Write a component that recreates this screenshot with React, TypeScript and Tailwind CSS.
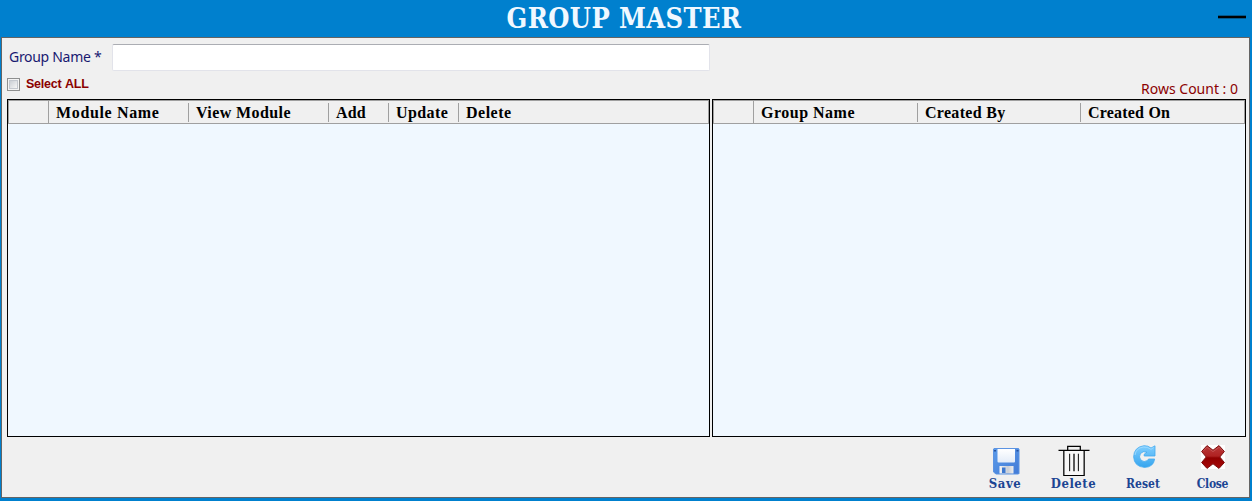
import type { ReactNode } from "react";

type Column = { label: string; cell: string; text: string };

const moduleColumns: Column[] = [
  { label: "Module Name", cell: "w-[140px]", text: "tracking-[0.65px]" },
  { label: "View Module", cell: "w-[140px]", text: "tracking-[0.4px]" },
  { label: "Add", cell: "w-[60px]", text: "tracking-[0.1px]" },
  { label: "Update", cell: "w-[70px]", text: "tracking-[0.4px]" },
  { label: "Delete", cell: "flex-1", text: "tracking-[0.5px]" },
];

const groupColumns: Column[] = [
  { label: "Group Name", cell: "w-[164px]", text: "tracking-[0.5px]" },
  { label: "Created By", cell: "w-[163px]", text: "tracking-[0.3px]" },
  { label: "Created On", cell: "flex-1", text: "tracking-[0.2px]" },
];

function Grid({ columns, size }: { columns: Column[]; size: string }) {
  return (
    <section className={`h-[338px] border border-black bg-[#f0f8ff] ${size}`}>
      <div className="flex h-6 border border-[#a0a0a0] bg-[#f0f0f0]">
        <div className="w-10 shrink-0 border-r border-[#a0a0a0]" />
        {columns.map((column, i) => (
          <div key={column.label} className={`flex items-center ${column.cell}`}>
            <span
              className={`flex-1 whitespace-nowrap pt-0.5 pl-[7px] font-['Liberation_Serif',serif] text-[16px] leading-[22px] font-bold text-black ${column.text}`}
            >
              {column.label}
            </span>
            {i < columns.length - 1 && <i className="h-[19px] w-px bg-[#a0a0a0]" />}
          </div>
        ))}
      </div>
    </section>
  );
}

function SaveIcon() {
  return (
    <svg width="27" height="27" viewBox="0 0 27 27" className="block">
      <defs>
        <linearGradient id="disk" x1="0" y1="0" x2="1" y2="1">
          <stop offset="0" stopColor="#5b9bea" />
          <stop offset="1" stopColor="#427bd6" />
        </linearGradient>
        <linearGradient id="paper" x1="0" y1="0" x2="0" y2="1">
          <stop offset="0" stopColor="#ffffff" />
          <stop offset="1" stopColor="#e3ecf8" />
        </linearGradient>
        <linearGradient id="metal" x1="0" y1="0" x2="1" y2="0">
          <stop offset="0" stopColor="#f5f5f5" />
          <stop offset="0.6" stopColor="#c9ced6" />
          <stop offset="1" stopColor="#eeeeee" />
        </linearGradient>
      </defs>
      <path d="M1 .5h24.5l.5.5v24.5l-.5.5H3L.5 24V1z" fill="url(#disk)" stroke="#5b93e2" />
      <path d="M4.5 1h17.5v12.500q0 1-1 1H5.500q-1 0-1-1z" fill="url(#paper)" />
      <path d="M1 2h2v1.500H1zM23.500 2h2v1.500h-2z" fill="#24509b" />
      <path d="M6.500 18h14v7.500h-14z" fill="url(#metal)" />
      <path d="M9 19.500h3.500V25H9z" fill="#3d78cf" />
    </svg>
  );
}

function TrashIcon() {
  return (
    <svg width="32" height="32" viewBox="0 0 32 32" className="block" fill="none" stroke="#000">
      <path d="M5.500 5h21v26h-21z" fill="#f7f7f7" stroke="none" />
      <path d="M0 5.500h32M5.500 5.500v26h21v-26M9.500 5V1.500h13V5" strokeWidth="1.300" />
      <path d="M11.500 9v18M20.500 9v18" />
      <path d="M16 9v18" stroke="#555" strokeWidth="2" />
    </svg>
  );
}

function ResetIcon() {
  return (
    <svg width="23" height="23" viewBox="0 0 23 23" className="block">
      <defs>
        <linearGradient id="arrow" x1="0" y1="0" x2="0" y2="1">
          <stop offset="0" stopColor="#7fceff" />
          <stop offset="1" stopColor="#36a5ee" />
        </linearGradient>
      </defs>
      <path
        d="M22 .8V11H11.200V9.200L14 7.200Q10 5.600 7.500 8.500Q5.200 12 8 15.200Q11 17.800 14.500 15.500L15.500 14H21.700Q20.400 22.300 11.500 22.400Q1.200 21.800.6 11.800Q1 2 11 .7Q15 .5 18 3z"
        fill="url(#arrow)"
        stroke="#42aaf0"
        strokeWidth=".8"
      />
      <path d="M2 10Q3 3 10.500 2Q14.500 1.600 18 4.300L20.600 2.500" fill="none" stroke="#a5ddff" strokeWidth=".8" />
    </svg>
  );
}

function CloseIcon() {
  return (
    <svg width="24" height="24" viewBox="0 0 24 24" className="block">
      <defs>
        <linearGradient id="cross" x1="0" y1="0" x2="0" y2="1">
          <stop offset="0" stopColor="#b93a3a" />
          <stop offset=".46" stopColor="#b02222" />
          <stop offset=".54" stopColor="#900000" />
          <stop offset="1" stopColor="#a80808" />
        </linearGradient>
      </defs>
      <path d="M0 0h24v24H0z" fill="#fff" />
      <path
        d="M6 .6L12 5.200L18 .6L23.400 6.500L18.800 12L23.400 17.500L18 23.400L12 18.800L6 23.400L.6 17.500L5.200 12L.6 6.500z"
        fill="url(#cross)"
        stroke="#7c1010"
        strokeWidth="1"
        strokeLinejoin="round"
      />
      <path d="M2 6.300L6 2.200L12 6.700L18 2.200L22 6.300" fill="none" stroke="#cc6060" strokeWidth=".7" />
    </svg>
  );
}

function Action({ icon, label, box, text }: { icon: ReactNode; label: string; box: string; text: string }) {
  return (
    <button type="button" className={`flex h-[60px] flex-col items-center justify-between pb-[5px] ${box}`}>
      {icon}
      <span
        className={`whitespace-nowrap font-['DejaVu_Serif_Condensed','DejaVu_Serif',serif] font-bold leading-4 text-[#1c4593] ${text}`}
      >
        {label}
      </span>
    </button>
  );
}

export default function App() {
  return (
    <main className="flex h-[501px] w-[1252px] flex-col overflow-hidden bg-[#0080ce] pr-0.5 pb-[3px] pl-px">
      <header className="flex h-[37px] shrink-0 items-start">
        <div className="w-[29px]" />
        <h1 className="flex-1 pt-px text-center font-['DejaVu_Serif_Condensed','DejaVu_Serif',serif] text-[27px] leading-[36px] font-bold tracking-[0.4px] text-[#f0f8ff]">
          GROUP MASTER
        </h1>
        <button type="button" aria-label="Minimize" className="mt-[15px] mr-[4px] h-1 w-7 border-y border-[#04588c] bg-black" />
      </header>
      <div className="flex flex-1 flex-col border border-[#646464] bg-[#f0f0f0]">
        <div className="flex h-[61px] justify-between pl-[5px]">
          <div className="pt-[6px]">
            <label className="flex h-[27px] items-center">
              <span className="w-[105px] pb-[3px] pl-[2px] font-['Noto_Sans',sans-serif] text-[14px] tracking-[-0.3px] whitespace-nowrap text-[#191970]">
                Group Name *
              </span>
              <input
                type="text"
                className="h-[27px] w-[598px] rounded-[2px] border border-[#e2e3ea] border-t-[#abadb3] bg-white px-1 outline-none"
              />
            </label>
            <label className="mt-[4px] flex h-[18px] items-center">
              <span className="flex h-[13px] w-[13px] border border-[#8e8f8f] bg-[#f4f4f4] p-px">
                <i className="flex-1 border border-[#c4c8cf] bg-linear-to-br from-[#cbcfd5] to-[#f6f6f6]" />
              </span>
              <span className="pl-[6px] font-['Liberation_Sans',sans-serif] text-[12.5px] font-bold tracking-[-0.25px] text-[#8b0000] [word-spacing:1px]">
                Select ALL
              </span>
            </label>
          </div>
          <span className="mt-[41px] mr-[11px] font-['Noto_Sans',sans-serif] text-[14px] leading-5 text-[#8b0000]">
            Rows Count : 0
          </span>
        </div>
        <div className="flex gap-0.5 pl-[5px]">
          <Grid columns={moduleColumns} size="w-[703px]" />
          <Grid columns={groupColumns} size="w-[534px]" />
        </div>
        <footer className="flex flex-1 items-start justify-end pr-[6px]">
          <Action icon={<SaveIcon />} label="Save" box="w-[60px] pt-[11px]" text="text-[13px] tracking-[0.5px] mr-0.5" />
          <Action icon={<TrashIcon />} label="Delete" box="ml-2 w-[60px] pt-[8px]" text="text-[13px] tracking-[0.5px] mr-px" />
          <Action icon={<ResetIcon />} label="Reset" box="ml-[10px] w-[60px] pt-[8px]" text="text-[12px] mr-0.5" />
          <Action icon={<CloseIcon />} label="Close" box="ml-[9px] w-[60px] pt-[8px]" text="text-[12px] tracking-[-0.3px] mr-px" />
        </footer>
      </div>
    </main>
  );
}
